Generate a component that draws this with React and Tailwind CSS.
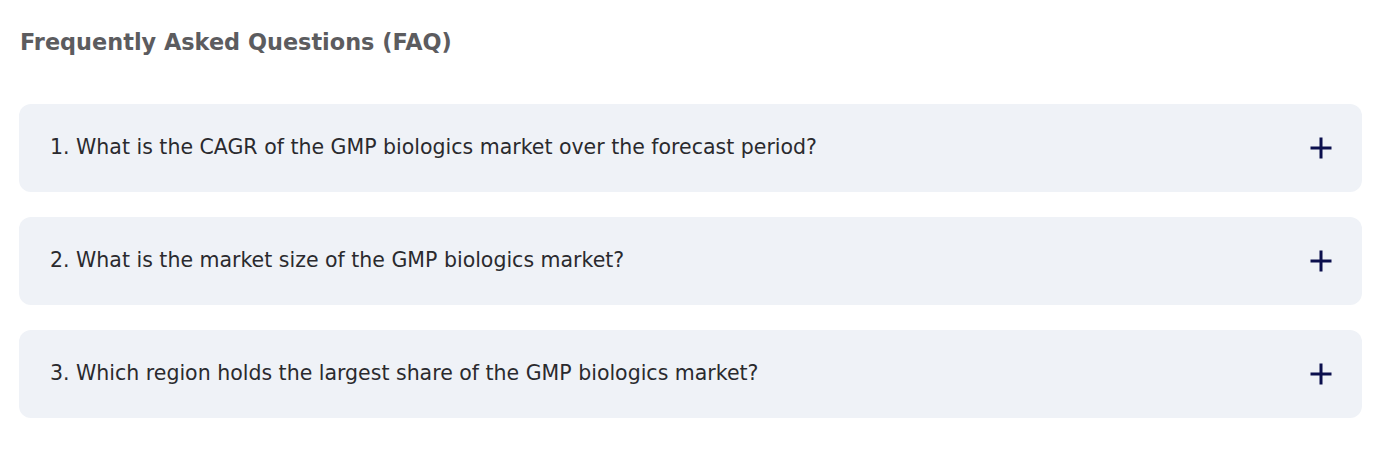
const faqs = [
  '1. What is the CAGR of the GMP biologics market over the forecast period?',
  '2. What is the market size of the GMP biologics market?',
  '3. Which region holds the largest share of the GMP biologics market?',
]

function Plus() {
  return (
    <svg width="22" height="22" viewBox="0 0 22 22" className="shrink-0">
      <path d="M11 0.5v21M0.5 11h21" stroke="#0b0f4d" strokeWidth="3" fill="none" />
    </svg>
  )
}

export default function App() {
  return (
    <div className="bg-white w-[1384px] h-[454px] pl-[19px] pr-[22px] pt-[27px]">
      <h2 className="text-[22.4px] font-bold text-[#5c5c5f] leading-[30px] pl-[1px] font-['DejaVu_Sans',sans-serif]">
        Frequently Asked Questions (FAQ)
      </h2>
      <div className="mt-[47px] flex flex-col gap-[25px]">
        {faqs.map((q) => (
          <div
            key={q}
            className="h-[88px] rounded-[12px] bg-[#eff2f7] flex items-center justify-between pl-[31px] pr-[30px]"
          >
            <span className="text-[20.5px] text-[#2a2a2e] font-['DejaVu_Sans',sans-serif] pb-[1px]">{q}</span>
            <Plus />
          </div>
        ))}
      </div>
    </div>
  )
}
